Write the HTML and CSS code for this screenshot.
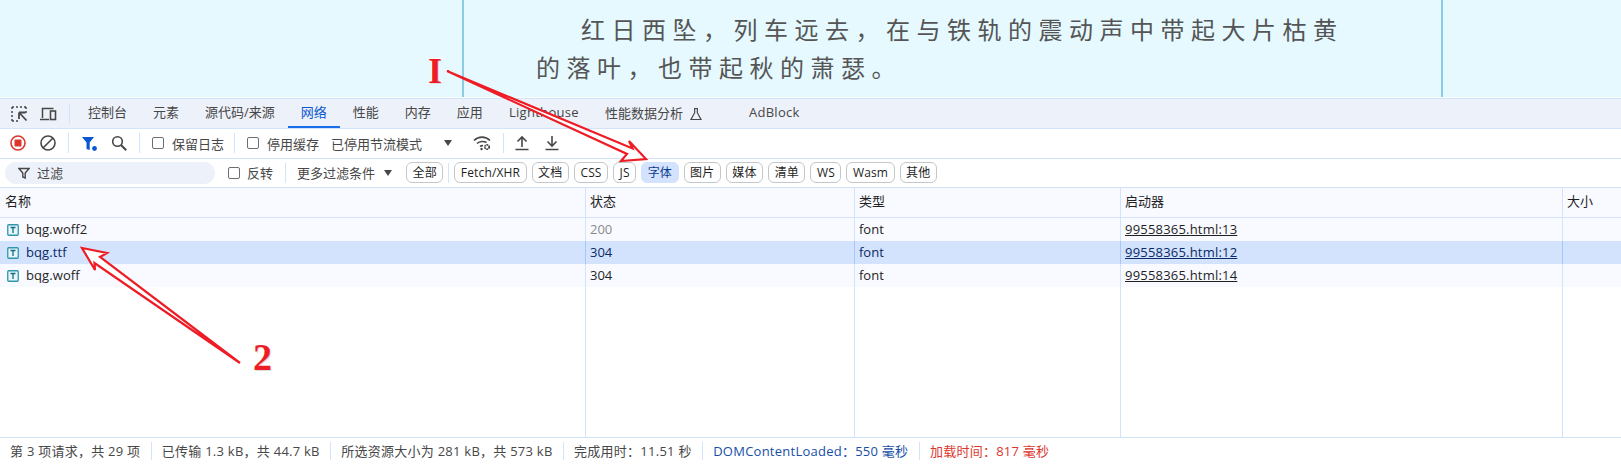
FILE: index.html
```html
<!DOCTYPE html>
<html lang="zh-CN">
<head>
<meta charset="utf-8">
<title>DevTools</title>
<link rel="stylesheet" href="styles.css">
</head>
<body>
<section class="page">
  <div class="article">
    <p class="poem">红日西坠，列车远去，在与铁轨的震动声中带起大片枯黄<br>的落叶，也带起秋的萧瑟。</p>
  </div>
</section>
<section class="devtools">
  <nav class="tabs">
    <svg class="icon first" viewBox="0 0 18 18"><path d="M2 2h2M6 2h2M10 2h2M14 2h2M2 2v2M2 6v2M2 10v2M2 14v2M2 16h2M6 16h2M16 2v2M16 6v2" fill="none" stroke="#474747" stroke-width="1.5"/><path d="M9 7.5h6.5M9 7.5v6.5M9.5 8l7 7.5" fill="none" stroke="#474747" stroke-width="1.8"/></svg>
    <svg class="icon device" viewBox="0 0 18 18"><path d="M3.5 13V3.5h11M1 14.5h9" fill="none" stroke="#474747" stroke-width="1.5"/><rect x="11.5" y="6" width="5" height="8.5" fill="none" stroke="#474747" stroke-width="1.6"/></svg>
    <span class="divider"></span>
    <a class="tab">控制台</a><a class="tab">元素</a><a class="tab">源代码/来源</a><a class="tab active">网络</a><a class="tab">性能</a><a class="tab">内存</a><a class="tab">应用</a><a class="tab latin">Lighthouse</a>
    <a class="tab lab">性能数据分析<svg class="flask" viewBox="0 0 14 14"><path d="M5 1.5h4M5.700 1.500v4.200L2 12.500h10L8.300 5.700V1.500" fill="none" stroke="#474747" stroke-width="1.2"/></svg></a>
    <a class="tab ad latin">AdBlock</a>
  </nav>
  <div class="toolbar">
    <svg class="icon record" viewBox="0 0 16 16"><circle cx="8" cy="8" r="7" fill="none" stroke="#dc362e" stroke-width="1.6"/><rect x="4.500" y="4.500" width="7" height="7" rx="1" fill="#dc362e"/></svg>
    <svg class="icon clear" viewBox="0 0 16 16"><circle cx="8" cy="8" r="7" fill="none" stroke="#474747" stroke-width="1.6"/><path d="M3 13L13 3" stroke="#474747" stroke-width="1.6"/></svg>
    <span class="divider"></span>
    <svg class="icon funnel" viewBox="0 0 16 16"><path d="M1 2h12L8.700 7.500V15l-3.200-1V7.500z" fill="#0b57d0"/><circle cx="13.500" cy="13.500" r="2.400" fill="#0b57d0"/></svg>
    <svg class="icon search" viewBox="0 0 16 16"><circle cx="6.500" cy="6.500" r="4.800" fill="none" stroke="#474747" stroke-width="1.6"/><path d="M10 10l5.200 5.200" stroke="#474747" stroke-width="2"/></svg>
    <span class="divider"></span>
    <label class="check preserve"><span class="box"></span>保留日志</label>
    <span class="divider"></span>
    <label class="check"><span class="box"></span>停用缓存</label>
    <span class="throttle">已停用节流模式</span>
    <span class="caret caret-wide"></span>
    <svg class="icon wifi" viewBox="0 0 18 16"><path d="M1 5.500C5.500 1 12.500 1 17 5.500M4 8.500C6.800 6 11 6 13.500 7.500M7 11.500c1-.8 2-1 3-.8" fill="none" stroke="#474747" stroke-width="1.6"/><circle cx="14" cy="12" r="2.200" fill="none" stroke="#474747" stroke-width="1.8" stroke-dasharray="1.6 .6"/><circle cx="8.500" cy="14" r="1.200" fill="#474747"/></svg>
    <span class="divider"></span>
    <svg class="icon up" viewBox="0 0 16 16"><path d="M8 12V2M3.500 6.500L8 2l4.500 4.500M1.500 14.500h13" fill="none" stroke="#474747" stroke-width="1.6"/></svg>
    <svg class="icon down" viewBox="0 0 16 16"><path d="M8 1v10M3.500 6.500L8 11l4.500-4.500M1.500 14.500h13" fill="none" stroke="#474747" stroke-width="1.6"/></svg>
  </div>
  <div class="filters">
    <div class="search-pill">
      <svg class="pill-icon" viewBox="0 0 12 12"><path d="M1 1.500h10L7.200 6v5L4.800 10V6z" fill="none" stroke="#474747" stroke-width="1.4"/></svg>
      <span>过滤</span>
    </div>
    <label class="check invert"><span class="box"></span>反转</label>
    <span class="divider"></span>
    <span class="more">更多过滤条件</span>
    <span class="caret"></span>
    <div class="chips">
      <span class="chip">全部</span>
      <span class="divider chip-divider"></span>
      <span class="chip">Fetch/XHR</span><span class="chip">文档</span><span class="chip">CSS</span><span class="chip">JS</span><span class="chip selected">字体</span><span class="chip">图片</span><span class="chip">媒体</span><span class="chip">清单</span><span class="chip">WS</span><span class="chip">Wasm</span><span class="chip">其他</span>
    </div>
  </div>
  <div class="table">
    <div class="row head"><div>名称</div><div>状态</div><div>类型</div><div>启动器</div><div>大小</div></div>
    <div class="row odd">
      <div class="name"><svg class="file" viewBox="0 0 12 12"><rect x=".75" y=".75" width="10.500" height="10.500" rx="1" fill="#e8f6f9" stroke="#2e97ad" stroke-width="1.3"/><path d="M3.500 3.500h5M6 3.500v5.500" stroke="#146c85" stroke-width="1.3" fill="none"/></svg>bqg.woff2</div>
      <div class="muted">200</div><div>font</div><div><a class="link">99558365.html:13</a></div><div></div>
    </div>
    <div class="row current">
      <div class="name"><svg class="file" viewBox="0 0 12 12"><rect x=".75" y=".75" width="10.500" height="10.500" rx="1" fill="#e8f6f9" stroke="#2e97ad" stroke-width="1.3"/><path d="M3.500 3.500h5M6 3.500v5.500" stroke="#146c85" stroke-width="1.3" fill="none"/></svg>bqg.ttf</div>
      <div>304</div><div>font</div><div><a class="link">99558365.html:12</a></div><div></div>
    </div>
    <div class="row odd">
      <div class="name"><svg class="file" viewBox="0 0 12 12"><rect x=".75" y=".75" width="10.500" height="10.500" rx="1" fill="#e8f6f9" stroke="#2e97ad" stroke-width="1.3"/><path d="M3.500 3.500h5M6 3.500v5.500" stroke="#146c85" stroke-width="1.3" fill="none"/></svg>bqg.woff</div>
      <div>304</div><div>font</div><div><a class="link">99558365.html:14</a></div><div></div>
    </div>
    <div class="row rest"><div></div><div></div><div></div><div></div><div></div></div>
  </div>
  <footer class="status">
    <span>第 3 项请求，共 29 项</span>
    <span>已传输 1.3 kB，共 44.7 kB</span>
    <span>所选资源大小为 281 kB，共 573 kB</span>
    <span>完成用时：11.51 秒</span>
    <span class="dcl">DOMContentLoaded：550 毫秒</span>
    <span class="load">加载时间：817 毫秒</span>
  </footer>
</section>
<svg class="arrows" viewBox="0 0 1621 466">
  <path class="arrow" d="M447 71L632.500 148.500L629 141L646 159L621 161L627 154Z"/>
  <path class="arrow" d="M240 363L100 257L107 253L82 248L95 270L94.500 263Z"/>
</svg>
<span class="mark mark-one">I</span>
<span class="mark mark-two">2</span>
</body>
</html>
```
FILE: styles.css
```css
* { box-sizing: border-box; }
html, body { margin: 0; height: 466px; overflow: hidden; }
body {
  position: relative;
  display: flex;
  flex-direction: column;
  background: #fff;
  font-family: "Open Sans", "Noto Sans CJK SC", sans-serif;
  font-size: 13px;
  color: #1f1f1f;
}
.page { height: 97px; background: #e5f9ff; padding-left: 462px; }
.article {
  width: 981px;
  height: 97px;
  border-left: 2px solid #8ccbe8;
  border-right: 2px solid #8ccbe8;
  padding: 10px 0 0 72px;
}
.poem {
  margin: 0;
  white-space: nowrap;
  font-family: "Noto Sans CJK SC", sans-serif;
  font-size: 24px;
  line-height: 37.500px;
  letter-spacing: 6.500px;
  text-indent: 45px;
  color: #555;
}
.devtools { flex: 1; min-height: 0; display: flex; flex-direction: column; padding-top: 1px; }
.divider { width: 1px; height: 20px; background: #d2e3fc; flex: none; }
.icon { flex: none; display: block; }

.tabs {
  display: flex;
  align-items: center;
  height: 31px;
  background: #edf1f9;
  border-top: 1px solid #d2e3fc;
  border-bottom: 1px solid #d2e3fc;
  color: #474747;
}
.tabs .first { width: 18px; height: 18px; margin-left: 10px; }
.tabs .device { width: 18px; height: 18px; margin-left: 11px; }
.tabs .divider { margin-left: 12px; margin-right: 5px; }
.tab {
  position: relative;
  height: 29px;
  line-height: 27px;
  padding: 0 13px;
  white-space: nowrap;
}
.tab.latin { letter-spacing: .3px; }
.tab.active { color: #0b57d0; }
.tab.active::after {
  content: "";
  position: absolute;
  left: 0;
  right: 0;
  bottom: 0;
  height: 2px;
  background: #1a6ee8;
}
.lab { display: flex; align-items: center; gap: 6px; }
.flask { width: 14px; height: 14px; }
.tab.ad { margin-left: 20px; }

.toolbar {
  display: flex;
  align-items: center;
  gap: 12px;
  height: 30px;
  padding: 0 0 1px 10px;
  border-bottom: 1px solid #d2e3fc;
  color: #474747;
}
.toolbar .icon { width: 16px; height: 16px; }
.toolbar .clear, .toolbar .search { margin-left: 2px; }
.toolbar .wifi { width: 18px; margin-left: 9px; }
.toolbar .up { margin-left: -2px; }
.toolbar .down { margin-left: 2px; }
.check { display: flex; align-items: center; gap: 8px; white-space: nowrap; }
.toolbar .preserve { margin-right: -2px; }
.box {
  width: 12px;
  height: 12px;
  border: 1px solid #6b6f75;
  border-radius: 2px;
  background: #fff;
  flex: none;
}
.toolbar .throttle { white-space: nowrap; }
.caret {
  width: 0;
  height: 0;
  border-left: 4.500px solid transparent;
  border-right: 4.500px solid transparent;
  border-top: 6px solid #474747;
  flex: none;
}
.caret-wide { margin-left: 10px; }

.filters {
  display: flex;
  align-items: center;
  height: 29px;
  padding: 0 0 1px 5px;
  border-bottom: 1px solid #d2e3fc;
  color: #474747;
}
.search-pill {
  display: flex;
  align-items: center;
  gap: 7px;
  width: 210px;
  height: 22px;
  padding-left: 13px;
  border-radius: 11px;
  background: #edf1f9;
}
.pill-icon { width: 12px; height: 12px; }
.invert { margin-left: 13px; gap: 7px; }
.filters .divider { margin: 0 11px 0 12px; }
.more { white-space: nowrap; }
.filters .caret { margin-left: 9px; }
.chips { display: flex; align-items: center; gap: 5px; margin-left: 14px; }
.filters .chip-divider { margin: 0; height: 20px; }
.chip {
  height: 21px;
  line-height: 19px;
  padding: 0 5.500px;
  border: 1px solid #c4c7c9;
  border-radius: 6px;
  font-size: 12px;
  letter-spacing: .15px;
  color: #1f1f1f;
  white-space: nowrap;
}
.chip.selected { background: #d3e3fd; border-color: #d3e3fd; color: #0b3a8c; }

.table { flex: 1; min-height: 0; display: flex; flex-direction: column; }
.row {
  display: grid;
  grid-template-columns: 586px 269px 266px 442px 1fr;
  height: 23px;
  line-height: 23px;
  flex: none;
}
.row > div { padding-left: 4px; border-right: 1px solid #d2e3fc; white-space: nowrap; overflow: hidden; }
.row > div:last-child { border-right: none; }
.head { height: 30px; line-height: 27px; background: #f9faff; border-bottom: 1px solid #d2e3fc; }
.head > div:first-child { padding-left: 5px; }
.odd { background: #f9faff; }
.current { background: #d3e3fd; color: #0a2a66; }
.current > div { border-right-color: #a8c7fa; }
.muted { color: #8a8a8a; }
.row > .name { display: flex; align-items: center; gap: 7px; padding-left: 7px; letter-spacing: .1px; }
.file { width: 12px; height: 12px; flex: none; }
.link { text-decoration: underline; letter-spacing: .2px; }
.row.rest { flex: 1; height: auto; }

.status {
  display: flex;
  align-items: center;
  height: 29px;
  border-top: 1px solid #d2e3fc;
  padding: 0 0 2px 10px;
  letter-spacing: .25px;
  color: #474747;
}
.status span { padding-right: 10.250px; margin-right: 10.250px; border-right: 1px solid #d2e3fc; height: 18px; line-height: 18px; white-space: nowrap; }
.status span:last-child { border-right: none; }
.status .dcl { color: #174ea6; }
.status .load { color: #dc362e; }

.arrows { position: absolute; left: 0; top: 0; width: 1621px; height: 466px; pointer-events: none; }
.arrow { fill: #fff; stroke: #ee1c25; stroke-width: 2.200; stroke-linejoin: miter; }
.mark {
  position: absolute;
  font-family: "Liberation Serif", serif;
  font-weight: 700;
  color: #ee1c25;
  text-shadow: 1px 1px 0 #ddd, -1px -1px 0 #fff, 1px -1px 0 #fff, -1px 1px 0 #fff;
  line-height: 1;
}
.mark-one { left: 428px; top: 53px; font-size: 36px; }
.mark-two { left: 253px; top: 338px; font-size: 38px; }
```
